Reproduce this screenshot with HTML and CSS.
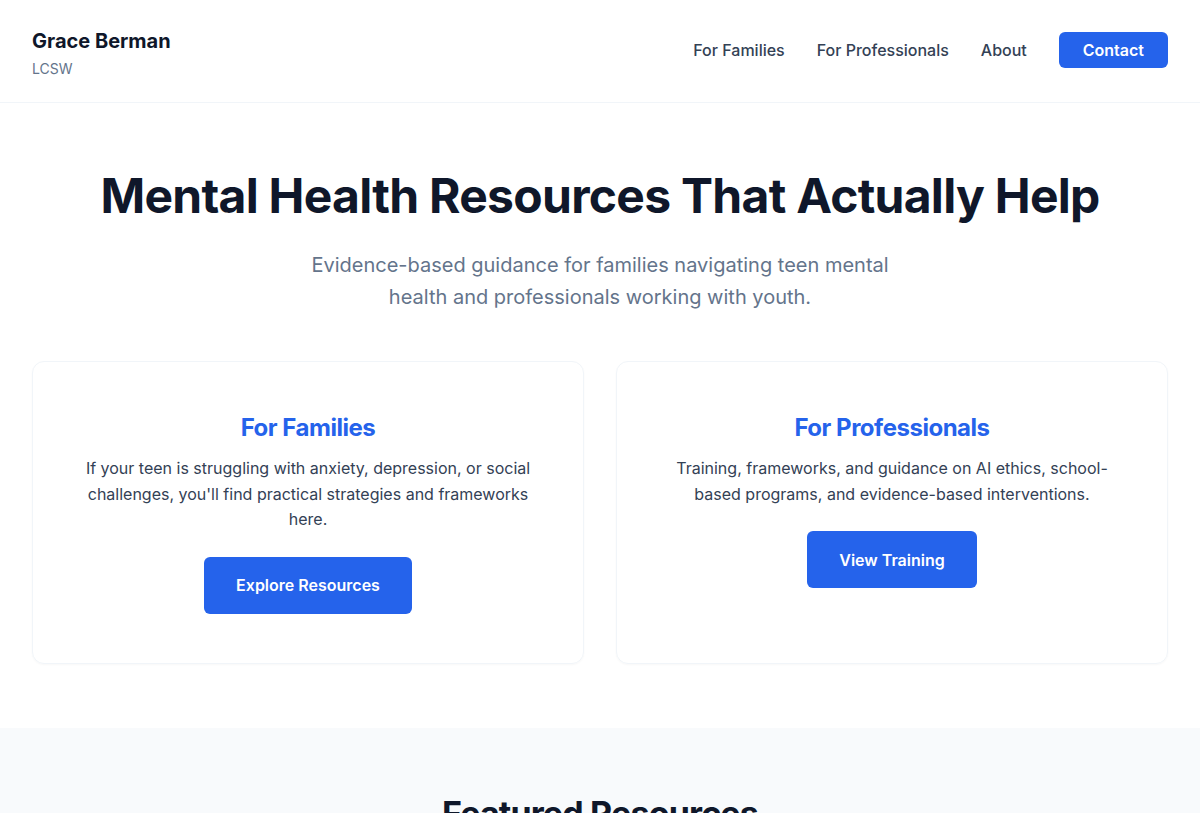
FILE: index.html
```html
<!DOCTYPE html>
<html lang="en">
<head>
<meta charset="utf-8">
<title>Grace Berman, LCSW</title>
<link rel="stylesheet" href="styles.css">
</head>
<body>
<header class="site-header">
  <div class="brand">
    <div class="brand-name">Grace Berman</div>
    <div class="brand-cred">LCSW</div>
  </div>
  <nav class="nav">
    <a class="nav-link" href="#">For Families</a>
    <a class="nav-link" href="#">For Professionals</a>
    <a class="nav-link" href="#">About</a>
    <a class="nav-cta" href="#">Contact</a>
  </nav>
</header>
<main>
  <section class="hero">
    <h1 class="hero-title">Mental Health Resources That Actually Help</h1>
    <p class="hero-sub">Evidence-based guidance for families navigating teen mental health and professionals working with youth.</p>
    <div class="cards">
      <div class="card">
        <h2 class="card-title">For Families</h2>
        <p class="card-text">If your teen is struggling with anxiety, depression, or social challenges, you'll find practical strategies and frameworks here.</p>
        <a class="btn" href="#">Explore Resources</a>
      </div>
      <div class="card">
        <h2 class="card-title">For Professionals</h2>
        <p class="card-text">Training, frameworks, and guidance on AI ethics, school-based programs, and evidence-based interventions.</p>
        <a class="btn" href="#">View Training</a>
      </div>
    </div>
  </section>
  <section class="featured">
    <h2 class="featured-title">Featured Resources</h2>
  </section>
</main>
</body>
</html>
```

FILE: styles.css
```css
* { box-sizing: border-box; }
html, body { margin: 0; padding: 0; }
body {
  font-family: Inter, "Noto Sans", sans-serif;
  color: #334155;
  background: #ffffff;
}
a { text-decoration: none; }

.site-header {
  display: flex;
  justify-content: space-between;
  align-items: center;
  height: 103px;
  padding: 0 32px;
  border-bottom: 1px solid #f1f5f9;
}
.brand { display: flex; flex-direction: column; gap: 4px; padding-top: 4px; }
.brand-name {
  font-size: 20px;
  font-weight: 700;
  color: #0f172a;
  letter-spacing: 0;
  line-height: 28px;
}
.brand-cred {
  font-size: 14px;
  color: #64748b;
  line-height: 20px;
}
.nav { display: flex; align-items: center; gap: 32px; padding-bottom: 3px; }
.nav-link {
  font-size: 16px;
  font-weight: 500;
  color: #334155;
}
.nav-cta {
  display: inline-flex;
  align-items: center;
  height: 36px;
  padding: 0 24px;
  background: #2563eb;
  color: #ffffff;
  font-size: 16px;
  font-weight: 600;
  border-radius: 6px;
}

.hero {
  padding: 64px 32px 64px;
  text-align: center;
}
.hero-title {
  margin: 0;
  font-size: 48px;
  line-height: 58px;
  font-weight: 700;
  color: #0f172a;
  letter-spacing: -0.015em;
}
.hero-sub {
  margin: 24px auto 0;
  max-width: 600px;
  font-size: 20px;
  line-height: 32px;
  color: #64748b;
}
.cards {
  margin-top: 48px;
  display: grid;
  grid-template-columns: 1fr 1fr;
  gap: 32px;
}
.card {
  border: 1px solid #f1f5f9;
  border-radius: 12px;
  padding: 49px 48px 49px;
  box-shadow: 0 1px 2px rgba(15, 23, 42, 0.03);
  display: flex;
  flex-direction: column;
  align-items: center;
}
.card-title {
  margin: 0;
  font-size: 24px;
  line-height: 34px;
  font-weight: 700;
  color: #2563eb;
  letter-spacing: -0.02em;
}
.card-text {
  margin: 11px 0 0;
  font-size: 16px;
  line-height: 25.6px;
  color: #334155;
}
.btn {
  margin-top: 24px;
  display: inline-flex;
  align-items: center;
  height: 57px;
  padding: 0 32px;
  background: #2563eb;
  color: #ffffff;
  font-size: 16px;
  font-weight: 600;
  border-radius: 6px;
}

.featured {
  background: #f8fafc;
  padding: 64px 32px;
  text-align: center;
  min-height: 200px;
}
.featured-title {
  margin: 0;
  font-size: 34px;
  line-height: 44px;
  font-weight: 700;
  color: #0f172a;
  letter-spacing: -0.025em;
}
```
